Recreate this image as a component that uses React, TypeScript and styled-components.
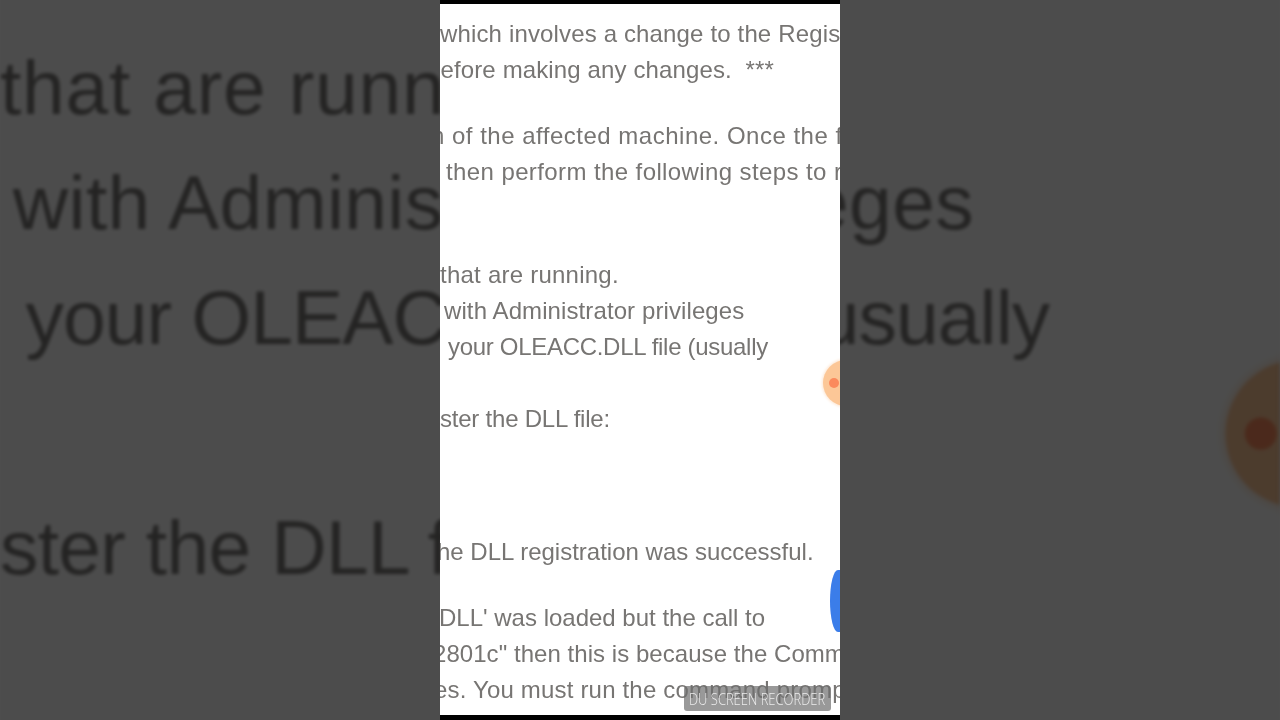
import React from 'react'
import styled, { createGlobalStyle } from 'styled-components'

const GlobalStyle = createGlobalStyle`
  html, body {
    margin: 0;
    padding: 0;
    width: 1280px;
    height: 720px;
    overflow: hidden;
    background: #4d4d4d;
  }
`

const Stage = styled.div`
  display: grid;
  width: 1280px;
  height: 720px;
  overflow: hidden;
  > * {
    grid-area: 1 / 1;
  }
`

const Backdrop = styled.div`
  display: flex;
  justify-content: center;
  overflow: hidden;
  background: #4d4d4d;
`

const Zoomed = styled.div`
  transform: scale(3.2);
  transform-origin: 50% 50%;
  filter: blur(0.45px) brightness(0.3);
`

const Foreground = styled.div`
  justify-self: center;
  position: relative;
`

const Sheet = styled.div`
  position: relative;
  box-sizing: border-box;
  width: 400px;
  height: 720px;
  padding-top: 12px;
  overflow: hidden;
  background: #fff;
  border-top: 4px solid #000;
  border-bottom: 5px solid #000;
  font-family: 'Liberation Sans', Arial, sans-serif;
  font-size: 24px;
  line-height: 36px;
  color: #777573;
  filter: blur(0.35px);
`

const Line = styled.div<{ $shift?: number; $gap?: number; $track?: number }>`
  height: 36px;
  white-space: pre;
  margin-left: ${(props) => props.$shift ?? 0}px;
  margin-top: ${(props) => props.$gap ?? 0}px;
  letter-spacing: ${(props) => props.$track ?? 0}px;
`

const Touch = styled.div`
  position: absolute;
  left: 383px;
  top: 356px;
  width: 46px;
  height: 46px;
  border-radius: 50%;
  background: #fcc797;
  box-shadow: 0 0 3px 1px #fde6d2;
  display: flex;
  align-items: center;
`

const TouchDot = styled.div`
  width: 10px;
  height: 10px;
  margin-left: 6px;
  border-radius: 50%;
  background: #fb8a5c;
`

const SideTab = styled.div`
  position: absolute;
  left: 390px;
  top: 566px;
  width: 24px;
  height: 62px;
  border-radius: 8px 0 0 8px / 31px 0 0 31px;
  background: #3b7de9;
`

const Watermark = styled.div`
  position: absolute;
  left: 244px;
  top: 686px;
  display: flex;
  align-items: center;
  justify-content: center;
  width: 147px;
  height: 25px;
  border-radius: 3px;
  background: rgba(110, 110, 110, 0.7);
  color: #ececec;
  font-family: 'Open Sans', sans-serif;
  font-size: 16px;
  font-weight: 300;
  white-space: nowrap;
  filter: blur(0.3px);
`

const WatermarkText = styled.span`
  flex: none;
  display: inline-block;
  transform: scaleX(0.81);
`

const lines = [
  { text: 'which involves a change to the Registry', track: 0.15 },
  { text: 'before making any changes.  ***', shift: -13, track: 0.13 },
  { text: 'n of the affected machine. Once the file', shift: -9, gap: 30, track: 0.5 },
  { text: 'then perform the following steps to register', shift: 6, track: 0.4 },
  { text: 'that are running.', gap: 67, track: 0.24 },
  { text: 'with Administrator privileges', shift: 4, track: 0.1 },
  { text: 'your OLEACC.DLL file (usually', shift: 8, track: -0.3 },
  { text: 'ster the DLL file:', gap: 36, track: -0.22 },
  { text: 'he DLL registration was successful.', shift: -3, gap: 97 },
  { text: "DLL' was loaded but the call to", shift: -1, gap: 30 },
  { text: '2801c" then this is because the Command', shift: -7, track: 0.05 },
  { text: 'es. You must run the command prompt', shift: -6, track: 0.18 },
]

const Document = () => (
  <Sheet>
    {lines.map((line) => (
      <Line key={line.text} $shift={line.shift} $gap={line.gap} $track={line.track}>
        {line.text}
      </Line>
    ))}
    <Touch>
      <TouchDot />
    </Touch>
    <SideTab />
  </Sheet>
)

const App = (): JSX.Element => (
  <Stage>
    <GlobalStyle />
    <Backdrop aria-hidden="true">
      <Zoomed>
        <Document />
      </Zoomed>
    </Backdrop>
    <Foreground>
      <Document />
      <Watermark>
        <WatermarkText>DU SCREEN RECORDER</WatermarkText>
      </Watermark>
    </Foreground>
  </Stage>
)

export default App
